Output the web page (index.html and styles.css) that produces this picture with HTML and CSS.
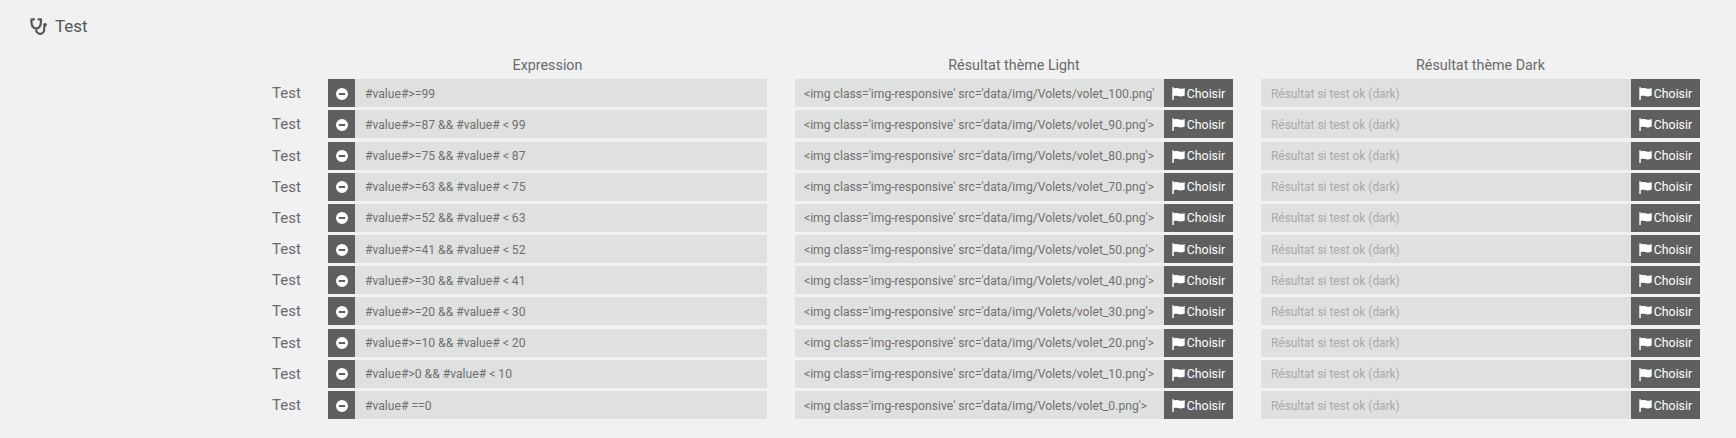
FILE: index.html
```html
<!DOCTYPE html>
<html lang="fr">
<head>
<meta charset="utf-8">
<title>Test</title>
<link rel="stylesheet" href="styles.css">
</head>
<body>
<svg class="sprites" width="0" height="0" aria-hidden="true">
  <symbol id="minus" viewBox="0 0 12 12"><path fill="#fff" fill-rule="evenodd" d="M6 0a6 6 0 1 1 0 12A6 6 0 0 1 6 0zM2.800 5.100v1.800h6.400V5.100z"/></symbol>
  <symbol id="flag" viewBox="0 0 13 13"><path fill="#fff" d="M0.300 0.300h1.500v1.100C3.400 0.700 4.800 0.800 6.200 1.300c1.900 0.700 3.900 0.600 6.500-0.400v7.600c-2.700 1.100-4.800 1.100-6.700 0.500-1.600-0.500-2.900-0.500-4.200 0V13H0.300z"/></symbol>
</svg>
<header class="title">
  <svg class="steth" viewBox="0 0 18 17" aria-hidden="true"><path fill="none" stroke="#555" stroke-width="2.200" stroke-linecap="round" stroke-linejoin="round" d="M4 1.300H1.500C1.200 5 1.600 10 6.200 10.500C10.800 10 11.200 5 10.900 1.300H8.500M6.200 10.500V11.500c0 2.500 1.800 4.300 4 4.300s4-1.800 4-4.300V9"/><circle cx="15" cy="6.800" r="1.900" fill="#555"/></svg>
  <span>Test</span>
</header>
<main class="table">
  <div class="row head"><span></span><span>Expression</span><span>Résultat thème Light</span><span>Résultat thème Dark</span></div>

  <div class="row"><label>Test</label><div class="group"><button class="btn rm"><svg class="i-minus"><use href="#minus"/></svg></button><input value="#value#&gt;=99"></div><div class="group"><input value="&lt;img class='img-responsive' src='data/img/Volets/volet_100.png'&gt;"><button class="btn"><svg class="i-flag"><use href="#flag"/></svg>Choisir</button></div><div class="group"><input placeholder="Résultat si test ok (dark)"><button class="btn"><svg class="i-flag"><use href="#flag"/></svg>Choisir</button></div></div>

  <div class="row"><label>Test</label><div class="group"><button class="btn rm"><svg class="i-minus"><use href="#minus"/></svg></button><input value="#value#&gt;=87 &amp;&amp; #value# &lt; 99"></div><div class="group"><input value="&lt;img class='img-responsive' src='data/img/Volets/volet_90.png'&gt;"><button class="btn"><svg class="i-flag"><use href="#flag"/></svg>Choisir</button></div><div class="group"><input placeholder="Résultat si test ok (dark)"><button class="btn"><svg class="i-flag"><use href="#flag"/></svg>Choisir</button></div></div>

  <div class="row"><label>Test</label><div class="group"><button class="btn rm"><svg class="i-minus"><use href="#minus"/></svg></button><input value="#value#&gt;=75 &amp;&amp; #value# &lt; 87"></div><div class="group"><input value="&lt;img class='img-responsive' src='data/img/Volets/volet_80.png'&gt;"><button class="btn"><svg class="i-flag"><use href="#flag"/></svg>Choisir</button></div><div class="group"><input placeholder="Résultat si test ok (dark)"><button class="btn"><svg class="i-flag"><use href="#flag"/></svg>Choisir</button></div></div>

  <div class="row"><label>Test</label><div class="group"><button class="btn rm"><svg class="i-minus"><use href="#minus"/></svg></button><input value="#value#&gt;=63 &amp;&amp; #value# &lt; 75"></div><div class="group"><input value="&lt;img class='img-responsive' src='data/img/Volets/volet_70.png'&gt;"><button class="btn"><svg class="i-flag"><use href="#flag"/></svg>Choisir</button></div><div class="group"><input placeholder="Résultat si test ok (dark)"><button class="btn"><svg class="i-flag"><use href="#flag"/></svg>Choisir</button></div></div>

  <div class="row"><label>Test</label><div class="group"><button class="btn rm"><svg class="i-minus"><use href="#minus"/></svg></button><input value="#value#&gt;=52 &amp;&amp; #value# &lt; 63"></div><div class="group"><input value="&lt;img class='img-responsive' src='data/img/Volets/volet_60.png'&gt;"><button class="btn"><svg class="i-flag"><use href="#flag"/></svg>Choisir</button></div><div class="group"><input placeholder="Résultat si test ok (dark)"><button class="btn"><svg class="i-flag"><use href="#flag"/></svg>Choisir</button></div></div>

  <div class="row"><label>Test</label><div class="group"><button class="btn rm"><svg class="i-minus"><use href="#minus"/></svg></button><input value="#value#&gt;=41 &amp;&amp; #value# &lt; 52"></div><div class="group"><input value="&lt;img class='img-responsive' src='data/img/Volets/volet_50.png'&gt;"><button class="btn"><svg class="i-flag"><use href="#flag"/></svg>Choisir</button></div><div class="group"><input placeholder="Résultat si test ok (dark)"><button class="btn"><svg class="i-flag"><use href="#flag"/></svg>Choisir</button></div></div>

  <div class="row"><label>Test</label><div class="group"><button class="btn rm"><svg class="i-minus"><use href="#minus"/></svg></button><input value="#value#&gt;=30 &amp;&amp; #value# &lt; 41"></div><div class="group"><input value="&lt;img class='img-responsive' src='data/img/Volets/volet_40.png'&gt;"><button class="btn"><svg class="i-flag"><use href="#flag"/></svg>Choisir</button></div><div class="group"><input placeholder="Résultat si test ok (dark)"><button class="btn"><svg class="i-flag"><use href="#flag"/></svg>Choisir</button></div></div>

  <div class="row"><label>Test</label><div class="group"><button class="btn rm"><svg class="i-minus"><use href="#minus"/></svg></button><input value="#value#&gt;=20 &amp;&amp; #value# &lt; 30"></div><div class="group"><input value="&lt;img class='img-responsive' src='data/img/Volets/volet_30.png'&gt;"><button class="btn"><svg class="i-flag"><use href="#flag"/></svg>Choisir</button></div><div class="group"><input placeholder="Résultat si test ok (dark)"><button class="btn"><svg class="i-flag"><use href="#flag"/></svg>Choisir</button></div></div>

  <div class="row"><label>Test</label><div class="group"><button class="btn rm"><svg class="i-minus"><use href="#minus"/></svg></button><input value="#value#&gt;=10 &amp;&amp; #value# &lt; 20"></div><div class="group"><input value="&lt;img class='img-responsive' src='data/img/Volets/volet_20.png'&gt;"><button class="btn"><svg class="i-flag"><use href="#flag"/></svg>Choisir</button></div><div class="group"><input placeholder="Résultat si test ok (dark)"><button class="btn"><svg class="i-flag"><use href="#flag"/></svg>Choisir</button></div></div>

  <div class="row"><label>Test</label><div class="group"><button class="btn rm"><svg class="i-minus"><use href="#minus"/></svg></button><input value="#value#&gt;0 &amp;&amp; #value# &lt; 10"></div><div class="group"><input value="&lt;img class='img-responsive' src='data/img/Volets/volet_10.png'&gt;"><button class="btn"><svg class="i-flag"><use href="#flag"/></svg>Choisir</button></div><div class="group"><input placeholder="Résultat si test ok (dark)"><button class="btn"><svg class="i-flag"><use href="#flag"/></svg>Choisir</button></div></div>

  <div class="row"><label>Test</label><div class="group"><button class="btn rm"><svg class="i-minus"><use href="#minus"/></svg></button><input value="#value# ==0"></div><div class="group"><input value="&lt;img class='img-responsive' src='data/img/Volets/volet_0.png'&gt;"><button class="btn"><svg class="i-flag"><use href="#flag"/></svg>Choisir</button></div><div class="group"><input placeholder="Résultat si test ok (dark)"><button class="btn"><svg class="i-flag"><use href="#flag"/></svg>Choisir</button></div></div>
</main>
</body>
</html>
```
FILE: styles.css
```css
* { box-sizing: border-box; }
html, body { margin: 0; height: 100%; overflow: hidden; }
body {
  background: #eff1f3;
  color: #6a6a6a;
  font-family: Roboto, "Liberation Sans", sans-serif;
  font-size: 14.3px;
}
.sprites { position: absolute; }
.title {
  display: flex;
  align-items: center;
  gap: 7px;
  height: 26px;
  margin: 13px 0 0 30px;
  font-size: 17px;
  color: #555;
}
.steth { width: 18px; height: 17px; }
.table {
  display: flex;
  flex-direction: column;
  gap: 3.2px;
  margin: 15.7px 36px 0 273px;
}
.row {
  display: grid;
  grid-template-columns: 27px 439px 438px 439px;
  column-gap: 28px;
  height: 28px;
  align-items: stretch;
}
.head {
  height: 20px;
  align-items: center;
  text-align: center;
  margin-bottom: 1.3px;
}
.row label { align-self: center; margin-left: -1px; font-size: 15px; white-space: nowrap; }
.group { display: flex; min-width: 0; }
.group input {
  flex: 1;
  min-width: 0;
  border: 0;
  outline: 0;
  padding: 1px 9px 0 9px;
  background: #dfe1e0;
  color: #707070;
  font: 12.15px Roboto, "Liberation Sans", sans-serif;
}
.btn.rm + input { padding-left: 10px; }
.group input:placeholder-shown { padding-left: 10px; font-size: 11.9px; }
.group input::placeholder { color: #a9a9a9; opacity: 1; }
.btn {
  display: flex;
  align-items: center;
  justify-content: center;
  gap: 2px;
  width: 69px;
  flex: none;
  border: 0;
  padding: 1px 0 0;
  background: #5f5f5f;
  color: #fff;
  font: 12.3px Roboto, "Liberation Sans", sans-serif;
}
.btn.rm { width: 27px; }
.i-minus { width: 12px; height: 12px; }
.i-flag { width: 13px; height: 13px; }
```
